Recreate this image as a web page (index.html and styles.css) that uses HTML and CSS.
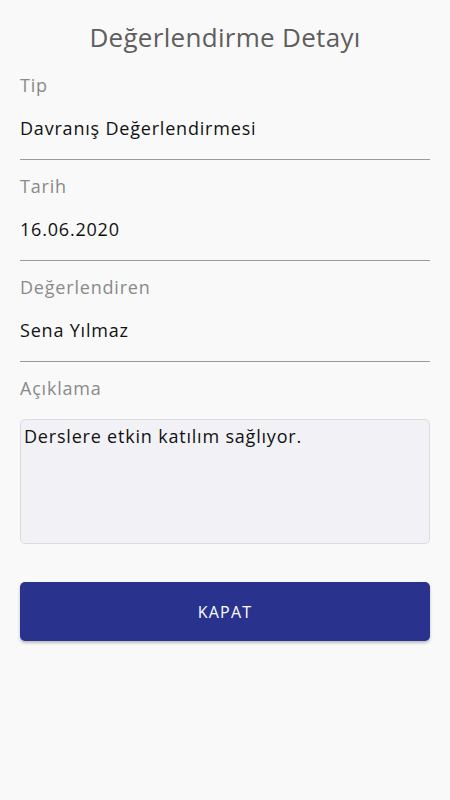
FILE: index.html
```html
<!DOCTYPE html>
<html lang="tr">
<head>
<meta charset="utf-8">
<title>Değerlendirme Detayı</title>
<link rel="stylesheet" href="styles.css">
</head>
<body>
<main class="screen">
  <h1 class="title">Değerlendirme Detayı</h1>
  <section class="field">
    <div class="label">Tip</div>
    <div class="value">Davranış Değerlendirmesi</div>
  </section>
  <section class="field">
    <div class="label">Tarih</div>
    <div class="value">16.06.2020</div>
  </section>
  <section class="field">
    <div class="label">Değerlendiren</div>
    <div class="value">Sena Yılmaz</div>
  </section>
  <section class="note">
    <div class="label">Açıklama</div>
    <div class="note-box">Derslere etkin katılım sağlıyor.</div>
  </section>
  <button class="close-btn" type="button">KAPAT</button>
</main>
</body>
</html>
```

FILE: styles.css
```css
* { box-sizing: border-box; }
html, body {
  margin: 0;
  padding: 0;
  background: #f9f9f9;
}
body {
  font-family: "Open Sans", "Noto Sans", sans-serif;
  width: 450px;
  height: 800px;
}
.screen {
  padding: 0 20px;
  display: flex;
  flex-direction: column;
}
.title {
  margin: 0;
  padding-top: 19px;
  height: 59px;
  text-align: center;
  font-weight: 400;
  font-size: 26px;
  line-height: 36px;
  letter-spacing: 0.3px;
  color: #5e5e5e;
}
.field {
  height: 101px;
  border-bottom: 1px solid #9a9a9a;
  display: flex;
  flex-direction: column;
}
.label {
  font-size: 18px;
  line-height: 24px;
  letter-spacing: 0.8px;
  color: #8a8a8a;
  padding-top: 14px;
}
.value {
  font-size: 18px;
  line-height: 24px;
  letter-spacing: 0.8px;
  color: #111;
  padding-top: 19px;
}
.note {
  display: flex;
  flex-direction: column;
}
.note-box {
  margin-top: 19px;
  height: 125px;
  background: #f2f2f6;
  border: 1px solid #dcdcdf;
  border-radius: 5px;
  padding: 4px 3px;
  font-size: 18px;
  line-height: 24px;
  letter-spacing: 0.8px;
  color: #111;
}
.close-btn {
  margin-top: 38px;
  height: 59px;
  border: none;
  border-radius: 5px;
  background: #29338e;
  color: #fff;
  font-family: inherit;
  font-size: 16px;
  letter-spacing: 1.2px;
  box-shadow: 0 2px 3px rgba(0, 0, 0, 0.25);
}
```
